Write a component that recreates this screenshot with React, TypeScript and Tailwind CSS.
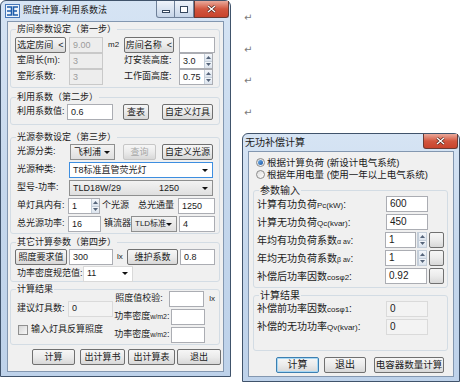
import type { ReactNode } from "react";

type BoxProps = { className?: string; children?: ReactNode };

const Btn = ({
  className = "",
  children,
  disabled,
  focus,
}: BoxProps & { disabled?: boolean; focus?: boolean }) => (
  <div
    className={`flex h-[16px] shrink-0 items-center justify-center overflow-visible rounded-[2px] border bg-gradient-to-b from-[#f6f6f6] via-[#ebebeb] to-[#d8d8d8] leading-none ${
      disabled
        ? "border-[#c6c6c6] text-[#a8a8a8]"
        : focus
        ? "border-[#3c7fb1] shadow-[inset_0_0_0_1px_#a8d8f4]"
        : "border-[#707070]"
    } ${className}`}
  >
    {children}
  </div>
);

const Field = ({
  className = "",
  children,
  disabled,
  flat,
}: BoxProps & { disabled?: boolean; flat?: boolean }) => (
  <div
    className={`flex h-[16px] shrink-0 items-center border px-[3px] leading-none ${
      disabled
        ? "border-[#c9c9c9] bg-[#ededed] text-[#9c9c9c]"
        : flat
        ? "border-[#dadada] bg-[#f3f3f3]"
        : "border-[#abadb3] bg-white"
    } ${className}`}
  >
    {children}
  </div>
);

const Arrows = () => (
  <div className="flex h-full w-[8px] shrink-0 flex-col border-l border-[#c4ced9]">
    <div className="flex flex-1 items-center justify-center bg-gradient-to-b from-[#f4f7fb] to-[#dbe3ed]">
      <svg width="5" height="3" viewBox="0 0 5 3">
        <path d="M0 3L2.5 0L5 3Z" fill="#55647a" />
      </svg>
    </div>
    <div className="flex flex-1 items-center justify-center border-t border-[#c4ced9] bg-gradient-to-b from-[#f4f7fb] to-[#dbe3ed]">
      <svg width="5" height="3" viewBox="0 0 5 3">
        <path d="M0 0L5 0L2.5 3Z" fill="#55647a" />
      </svg>
    </div>
  </div>
);

const SpinField = ({ className = "", children }: BoxProps) => (
  <div
    className={`flex h-[16px] shrink-0 items-stretch border border-[#abadb3] bg-white leading-none ${className}`}
  >
    <div className="flex flex-1 items-center px-[3px]">{children}</div>
    <Arrows />
  </div>
);

const Combo = ({
  className = "",
  children,
  white,
  focus,
}: BoxProps & { white?: boolean; focus?: boolean }) => (
  <div
    className={`flex h-[16px] shrink-0 items-center border pl-[3px] pr-[4px] leading-none ${
      focus
        ? "border-[#3d8ee0] bg-white"
        : white
        ? "border-[#d9d9d9] bg-white"
        : "border-[#8e8f8f] bg-gradient-to-b from-[#f3f3f3] to-[#dfdfdf]"
    } ${className}`}
  >
    <div className="flex min-w-0 flex-1 items-center">{children}</div>
    <svg width="6" height="3" viewBox="0 0 6 3" className="ml-[2px] shrink-0">
      <path d="M0 0H6L3 3Z" fill="#111" />
    </svg>
  </div>
);

const Group = ({
  label,
  className = "",
  children,
}: BoxProps & { label: string }) => (
  <div className={`rounded-[3px] border border-[#d3dce4] px-[4px] ${className}`}>
    <div className="-mt-[6px] ml-[1px] h-[11px] w-fit bg-[#f0f0f0] px-[1px] leading-[11px]">
      {label}
    </div>
    {children}
  </div>
);

const Radio = ({ checked }: { checked?: boolean }) => (
  <div className="flex h-[9px] w-[9px] shrink-0 items-center justify-center rounded-full border border-[#8b8b8b] bg-gradient-to-br from-[#dcdcdc] to-white">
    {checked && (
      <div className="h-[5px] w-[5px] rounded-full bg-gradient-to-br from-[#6fb0ea] to-[#1d56a3]" />
    )}
  </div>
);

const CloseBtn = ({ className = "" }: BoxProps) => (
  <div
    className={`flex items-center justify-center rounded-b-[3px] border border-t-0 border-[#6b3a33] bg-gradient-to-b from-[#e9a99b] via-[#d2563f] to-[#c8432c] ${className}`}
  >
    <svg width="9" height="8" viewBox="0 0 9 8">
      <path d="M1 1L8 7M8 1L1 7" stroke="#4a2019" strokeWidth="2.6" />
      <path d="M1 1L8 7M8 1L1 7" stroke="#fff" strokeWidth="1.4" />
    </svg>
  </div>
);

const AppIcon = () => (
  <svg width="15" height="14" viewBox="0 0 15 14">
    <rect x="0.5" y="0.5" width="14" height="13" fill="#eef4fb" stroke="#4677b8" />
    <path d="M2 3H6.5V11H2M2 7H6" stroke="#1e5cab" strokeWidth="1.5" fill="none" />
    <path d="M13 3H8.5V11H13M8.5 7H12" stroke="#1e5cab" strokeWidth="1.5" fill="none" />
  </svg>
);

const LightingWindow = () => (
  <div className="absolute left-0 top-0 flex h-[377px] w-[231px] flex-col rounded-t-[6px] border border-[#40536b] bg-gradient-to-b from-[#d6e4f4] via-[#c5d7ec] to-[#bed2ea]">
    <div className="flex h-[20px] shrink-0 items-start">
      <div className="ml-[4px] mt-[3px]">
        <AppIcon />
      </div>
      <div className="ml-[3px] mt-[5px] text-[9px] leading-none text-[#1a1a1a]">
        照度计算-利用系数法
      </div>
      <div className="ml-auto mr-[1px] flex">
        <div className="flex h-[17px] w-[19px] items-center justify-center rounded-bl-[3px] border border-t-0 border-[#6e8099] bg-gradient-to-b from-[#eef3fa] to-[#c6d5e8]">
          <div className="mt-[4px] h-[3px] w-[8px] border border-[#35475e] bg-white" />
        </div>
        <div className="flex h-[17px] w-[19px] items-center justify-center border border-l-0 border-t-0 border-[#6e8099] bg-gradient-to-b from-[#eef3fa] to-[#c6d5e8]">
          <div className="h-[7px] w-[8px] border-[1.5px] border-[#35475e] bg-white" />
        </div>
        <CloseBtn className="h-[17px] w-[35px] rounded-bl-none" />
      </div>
    </div>

    <div className="mx-[6px] flex h-[351px] flex-col border border-[#8397b0] bg-[#f0f0f0] pl-[2px] pr-[3px] text-[9px] text-[#1b1b1b]">
      <Group label="房间参数设定（第一步）" className="mt-[7px] pb-[2px]">
        <div className="mt-[2px] flex h-[16px] items-center">
          <Btn className="w-[51px]">选定房间&nbsp;&nbsp;&lt;</Btn>
          <Field disabled className="ml-[3px] w-[34px]">9.00</Field>
          <div className="w-[21px] pl-[5px] text-[8px]">m2</div>
          <Btn className="w-[50px]">房间名称&nbsp;&nbsp;&lt;</Btn>
          <Field className="ml-[5px] w-[36px]" />
        </div>
        <div className="flex h-[16px] items-center">
          <div className="w-[54px] pl-[2px]">室周长(m):</div>
          <Field disabled className="w-[34px]">3</Field>
          <div className="w-[21px]" />
          <div className="w-[55px]">灯安装高度:</div>
          <SpinField className="w-[34px]">3.0</SpinField>
        </div>
        <div className="flex h-[16px] items-center">
          <div className="w-[54px] pl-[2px]">室形系数:</div>
          <Field disabled className="w-[34px]">3</Field>
          <div className="w-[21px]" />
          <div className="w-[55px]">工作面高度:</div>
          <SpinField className="w-[34px]">0.75</SpinField>
        </div>
      </Group>

      <Group label="利用系数（第二步）" className="mt-[9px] pb-[4px]">
        <div className="mt-[1px] flex h-[16px] items-center">
          <div className="w-[52px] pl-[2px]">利用系数值:</div>
          <Field className="w-[46px]">0.6</Field>
          <Btn className="ml-[10px] w-[26px]">查表</Btn>
          <Btn className="ml-[13px] w-[51px]">自定义灯具</Btn>
        </div>
      </Group>

      <Group label="光源参数设定（第三步）" className="mt-[12px] pb-[1px]">
        <div className="mt-[1px] flex flex-col gap-[2px]">
          <div className="flex h-[16px] items-center">
            <div className="w-[55px] pl-[2px]">光源分类:</div>
            <Combo className="w-[45px]">飞利浦</Combo>
            <Btn disabled className="ml-[8px] w-[33px]">查询</Btn>
            <Btn className="ml-[6px] w-[51px]">自定义光源</Btn>
          </div>
          <div className="flex h-[16px] items-center">
            <div className="w-[54px] pl-[2px]">光源种类:</div>
            <Combo focus className="w-[144px]">T8标准直管荧光灯</Combo>
          </div>
          <div className="flex h-[16px] items-center">
            <div className="w-[54px] pl-[2px]">型号-功率:</div>
            <Combo className="w-[144px]">
              <span className="w-[86px]">TLD18W/29</span>
              <span>1250</span>
            </Combo>
          </div>
          <div className="flex h-[16px] items-center">
            <div className="w-[53px] pl-[2px]">单灯具内有:</div>
            <SpinField className="w-[32px]">1</SpinField>
            <div className="w-[38px] pl-[2px]">个光源</div>
            <div className="w-[40px]">总光通量</div>
            <Field className="w-[37px]">1250</Field>
          </div>
          <div className="flex h-[16px] items-center">
            <div className="w-[53px] pl-[2px]">总光源功率:</div>
            <Field className="w-[33px]">16</Field>
            <div className="w-[30px] pl-[3px]">镇流器</div>
            <Combo className="w-[46px] pl-[2px] pr-[3px] text-[8px]">TLD标准</Combo>
            <Field className="ml-[2px] w-[36px]">4</Field>
          </div>
        </div>
      </Group>

      <Group label="其它计算参数（第四步）" className="mt-[8px]">
        <div className="mt-[1px] flex h-[16px] items-center">
          <Btn className="w-[52px]">照度要求值</Btn>
          <Field className="ml-[2px] w-[44px]">300</Field>
          <div className="w-[14px] pl-[4px] text-[8px]">lx</div>
          <Btn className="w-[51px]">维护系数</Btn>
          <Field className="ml-[2px] w-[35px]">0.8</Field>
        </div>
        <div className="mt-[1px] flex h-[15px] items-center">
          <div className="w-[68px] pl-[2px]">功率密度规范值:</div>
          <Combo white className="h-[15px] w-[50px]">11</Combo>
        </div>
      </Group>

      <Group label="计算结果" className="mt-[7px] pb-[2px]">
        <div className="-mt-[3px] flex">
          <div className="flex w-[102px] flex-col">
            <div className="mt-[9px] flex h-[15px] items-center">
              <div className="w-[53px] pl-[2px]">建议灯具数:</div>
              <Field flat className="h-[15px] w-[45px]">0</Field>
            </div>
            <div className="mt-[9px] flex h-[10px] items-center">
              <div className="ml-[3px] h-[10px] w-[10px] border border-[#8f8f8f] bg-gradient-to-br from-[#d6d6d6] to-[#f7f7f7]" />
              <div className="ml-[3px]">输入灯具反算照度</div>
            </div>
          </div>
          <div className="flex flex-col gap-[4px]">
            <div className="flex h-[14px] items-center">
              <div className="w-[55px] pl-[1px]">照度值校验:</div>
              <Field className="h-[14px] w-[35px]" />
              <div className="pl-[5px] text-[8px]">lx</div>
            </div>
            <div className="flex h-[14px] items-center">
              <div className="w-[57px]">
                功率密度<span className="text-[7px]">w/m2</span>:
              </div>
              <Field className="h-[14px] w-[34px]" />
            </div>
            <div className="flex h-[14px] items-center">
              <div className="w-[57px]">
                功率密度<span className="text-[7px]">w/m2</span>:
              </div>
              <Field className="h-[14px] w-[34px]" />
            </div>
          </div>
        </div>
      </Group>

      <div className="mt-[4px] flex items-center">
        <Btn className="ml-[22px] w-[43px]">计算</Btn>
        <Btn className="ml-[5px] w-[45px]">出计算书</Btn>
        <Btn className="ml-[3px] w-[47px]">出计算表</Btn>
        <Btn className="ml-[2px] w-[44px]">退出</Btn>
      </div>
    </div>
  </div>
);

const ReactiveWindow = () => (
  <div className="absolute left-[242px] top-[133px] flex h-[249px] w-[218px] flex-col rounded-t-[6px] border border-[#40536b] bg-gradient-to-b from-[#d6e4f4] via-[#c5d7ec] to-[#bed2ea]">
    <div className="flex h-[17px] shrink-0 items-start">
      <div className="ml-[2px] mt-[4px] text-[10px] leading-none text-[#1a1a1a]">无功补偿计算</div>
      <CloseBtn className="ml-auto mr-[1px] h-[15px] w-[35px]" />
    </div>

    <div className="mx-[5px] flex h-[226px] flex-col border border-[#8397b0] bg-[#f0f0f0] text-[10px] text-[#1b1b1b]">
      <div className="ml-[7px] mt-[5px] flex h-[11px] items-center">
        <Radio checked />
        <div className="ml-[2px] text-[9.5px] leading-none">根据计算负荷 (新设计电气系统)</div>
      </div>
      <div className="ml-[7px] mt-[1px] flex h-[11px] items-center">
        <Radio />
        <div className="ml-[2px] text-[9.5px] leading-none">根据年用电量 (使用一年以上电气系统)</div>
      </div>

      <div className="ml-[4px] mr-[5px] mt-[10px] rounded-[3px] border border-[#d3dce4] px-[3px] pb-[3px]">
        <div className="-mt-[6px] ml-[2px] h-[12px] w-fit bg-[#f0f0f0] px-[1px] leading-[12px]">参数输入</div>
        <div className="-mt-[1px] flex flex-col gap-[2px]">
          <div className="flex h-[16px] items-center">
            <div className="w-[129px]">
              计算有功负荷<span className="text-[8px]">Pc(kW)</span>:
            </div>
            <Field className="w-[42px]">600</Field>
          </div>
          <div className="flex h-[16px] items-center">
            <div className="w-[129px]">
              计算无功负荷<span className="text-[8px]">Qc(kvar)</span>:
            </div>
            <Field className="w-[42px]">450</Field>
          </div>
          <div className="flex h-[16px] items-center">
            <div className="w-[129px]">
              年均有功负荷系数<span className="text-[7px]">α av</span>:
            </div>
            <Field className="w-[31px]">1</Field>
            <div className="ml-[1px] h-[16px] border border-[#c4ced9]">
              <Arrows />
            </div>
            <Btn className="ml-[2px] w-[15px]" />
          </div>
          <div className="flex h-[16px] items-center">
            <div className="w-[129px]">
              年均无功负荷系数<span className="text-[7px]">β av</span>:
            </div>
            <Field className="w-[31px]">1</Field>
            <div className="ml-[1px] h-[16px] border border-[#c4ced9]">
              <Arrows />
            </div>
            <Btn className="ml-[2px] w-[15px]" />
          </div>
          <div className="flex h-[16px] items-center">
            <div className="w-[129px]">
              补偿后功率因数<span className="text-[8px]">cosφ2</span>:
            </div>
            <Field className="w-[42px]">0.92</Field>
            <Btn className="ml-[2px] w-[15px]" />
          </div>
        </div>
      </div>

      <div className="ml-[4px] mr-[5px] mt-[7px] rounded-[3px] border border-[#d3dce4] px-[3px] pb-[16px]">
        <div className="-mt-[6px] ml-[2px] h-[12px] w-fit bg-[#f0f0f0] px-[1px] leading-[12px]">计算结果</div>
        <div className="-mt-[1px] flex flex-col gap-[3px]">
          <div className="flex h-[15px] items-center">
            <div className="w-[129px]">
              补偿前功率因数<span className="text-[8px]">cosφ1</span>:
            </div>
            <Field flat className="h-[15px] w-[42px]">0</Field>
          </div>
          <div className="flex h-[15px] items-center">
            <div className="w-[129px]">
              补偿的无功功率<span className="text-[8px]">Qv(kvar)</span>:
            </div>
            <Field flat className="h-[15px] w-[42px]">0</Field>
          </div>
        </div>
      </div>

      <div className="mt-[6px] flex items-center">
        <Btn focus className="ml-[27px] h-[15px] w-[43px]">计算</Btn>
        <Btn className="ml-[5px] h-[15px] w-[42px]">退出</Btn>
        <Btn className="ml-[8px] h-[15px] w-[70px] text-[9.5px]">电容器数量计算</Btn>
      </div>
    </div>
  </div>
);

export default function App() {
  return (
    <div className="relative h-[385px] w-[462px] overflow-hidden whitespace-nowrap bg-white font-['Liberation_Sans','Noto_Sans_CJK_SC',sans-serif]">
      <div className="flex flex-col pl-[244px] pt-[12px] font-['DejaVu_Sans',sans-serif] text-[10px] text-[#7a7a7a]">
        {[0, 1, 2, 3].map((i) => (
          <div key={i} className="h-[31.7px] leading-[12px]">
            ↵
          </div>
        ))}
      </div>
      <LightingWindow />
      <ReactiveWindow />
    </div>
  );
}
